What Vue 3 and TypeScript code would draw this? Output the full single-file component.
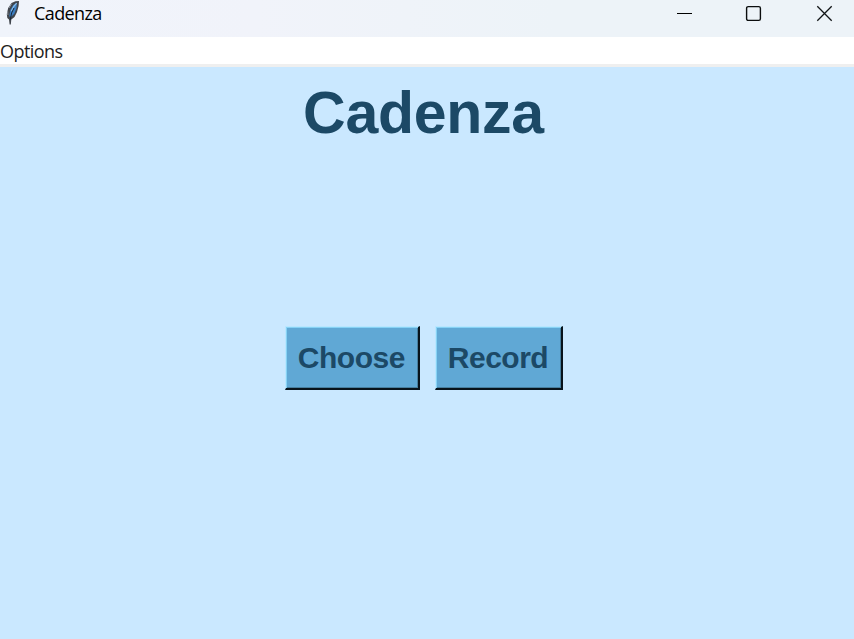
<script setup lang="ts">
import { ref } from 'vue'

const title = 'Cadenza'
const menus: string[] = ['Options']
const actions: string[] = ['Choose', 'Record']
const selected = ref<string | null>(null)
</script>

<template>
  <div class="window">
    <header class="titlebar">
      <svg class="feather" width="16" height="26" viewBox="0 0 16 26">
        <path d="M14 1 L10.5 1.2 L6.5 3 L3.2 8 L1.8 14 L2.3 18 L4 19.5 L4.6 24.5 L5.8 24.5 L6.3 19.5 L9.5 17 L12 12 L13.6 6 Z" fill="#41464d" />
        <path d="M11.8 3 L8.4 5 L5.4 10 L4.2 16.5 L6.6 16.5 L9.4 13.5 L11.5 8 Z" fill="#3b7fc4" />
        <path d="M11.6 3.2 L8.7 6.5 L6.4 11" fill="none" stroke="#8fc0ea" stroke-width="1.2" />
        <path d="M9 8 L6.6 13 L5.2 20" fill="none" stroke="#16273a" stroke-width="1" />
        <path d="M2.6 11 L2.9 15 M6.5 3.8 L4 8" fill="none" stroke="#9299a1" stroke-width="1" />
      </svg>
      <span class="caption">{{ title }}</span>
      <div class="controls">
        <svg width="17" height="17" viewBox="0 0 17 17">
          <path d="M1 8.5 H16" stroke="#000" stroke-width="1" />
        </svg>
        <svg width="17" height="17" viewBox="0 0 17 17">
          <rect x="1.6" y="1.6" width="13.8" height="13.8" rx="1.6" fill="none" stroke="#0b0d0e" stroke-width="1.4" />
        </svg>
        <svg width="17" height="17" viewBox="0 0 17 17">
          <path d="M1.3 1.3 L15.7 15.7 M15.7 1.3 L1.3 15.7" stroke="#111416" stroke-width="1.3" />
        </svg>
      </div>
    </header>
    <nav class="menubar">
      <span v-for="menu in menus" :key="menu" class="menu">{{ menu }}</span>
    </nav>
    <main class="content">
      <h1 class="heading">{{ title }}</h1>
      <div class="actions">
        <button v-for="action in actions" :key="action" class="action" @click="selected = action">
          {{ action }}
        </button>
      </div>
    </main>
  </div>
</template>

<style>
body {
  margin: 0;
  overflow: hidden;
}
</style>

<style scoped>
.window {
  display: flex;
  flex-direction: column;
  width: 854px;
  height: 639px;
  background: #cae8ff;
}
.titlebar {
  box-sizing: border-box;
  display: flex;
  align-items: flex-start;
  height: 37px;
  padding: 0 21px 0 5px;
  background: linear-gradient(90deg, #f0f4fb 0%, #f1f3fa 30%, #edf3f8 65%);
}
.feather {
  display: block;
}
.caption {
  margin-left: 13px;
  font: 18px/27px "Open Sans", sans-serif;
  letter-spacing: -0.6px;
  color: #000;
}
.controls {
  display: flex;
  gap: 54px;
  margin-left: auto;
  padding-top: 5px;
}
.controls svg {
  display: block;
}
.controls svg:first-child {
  margin-right: -2px;
}
.menubar {
  box-sizing: border-box;
  height: 30px;
  background: #fff;
  border-bottom: 3px solid #efefef;
}
.menu {
  display: block;
  font: 18px/29px "Open Sans", sans-serif;
  letter-spacing: -0.55px;
  color: #222;
}
.content {
  display: flex;
  flex-direction: column;
  align-items: center;
  font-family: "Liberation Sans", Arial, sans-serif;
  color: #1c4966;
}
.heading {
  margin: 12px 7px 0 0;
  font-size: 59px;
  line-height: 68px;
  font-weight: bold;
  letter-spacing: -0.25px;
}
.actions {
  display: flex;
  gap: 15px;
  margin: 179px 6px 0 0;
}
.action {
  box-sizing: border-box;
  height: 64px;
  padding: 1px 13px 0 12px;
  border-style: solid;
  border-width: 1px 2px 2px 1px;
  border-color: #b9e6ff #08131b #08131b #b9e6ff;
  box-shadow: inset 1px 1px #86d2f5, inset -1px -1px #477f9f;
  border-radius: 0;
  background: #60a8d5;
  color: #1c4966;
  font: bold 30px/34px "Liberation Sans", Arial, sans-serif;
  letter-spacing: -0.5px;
}
</style>
